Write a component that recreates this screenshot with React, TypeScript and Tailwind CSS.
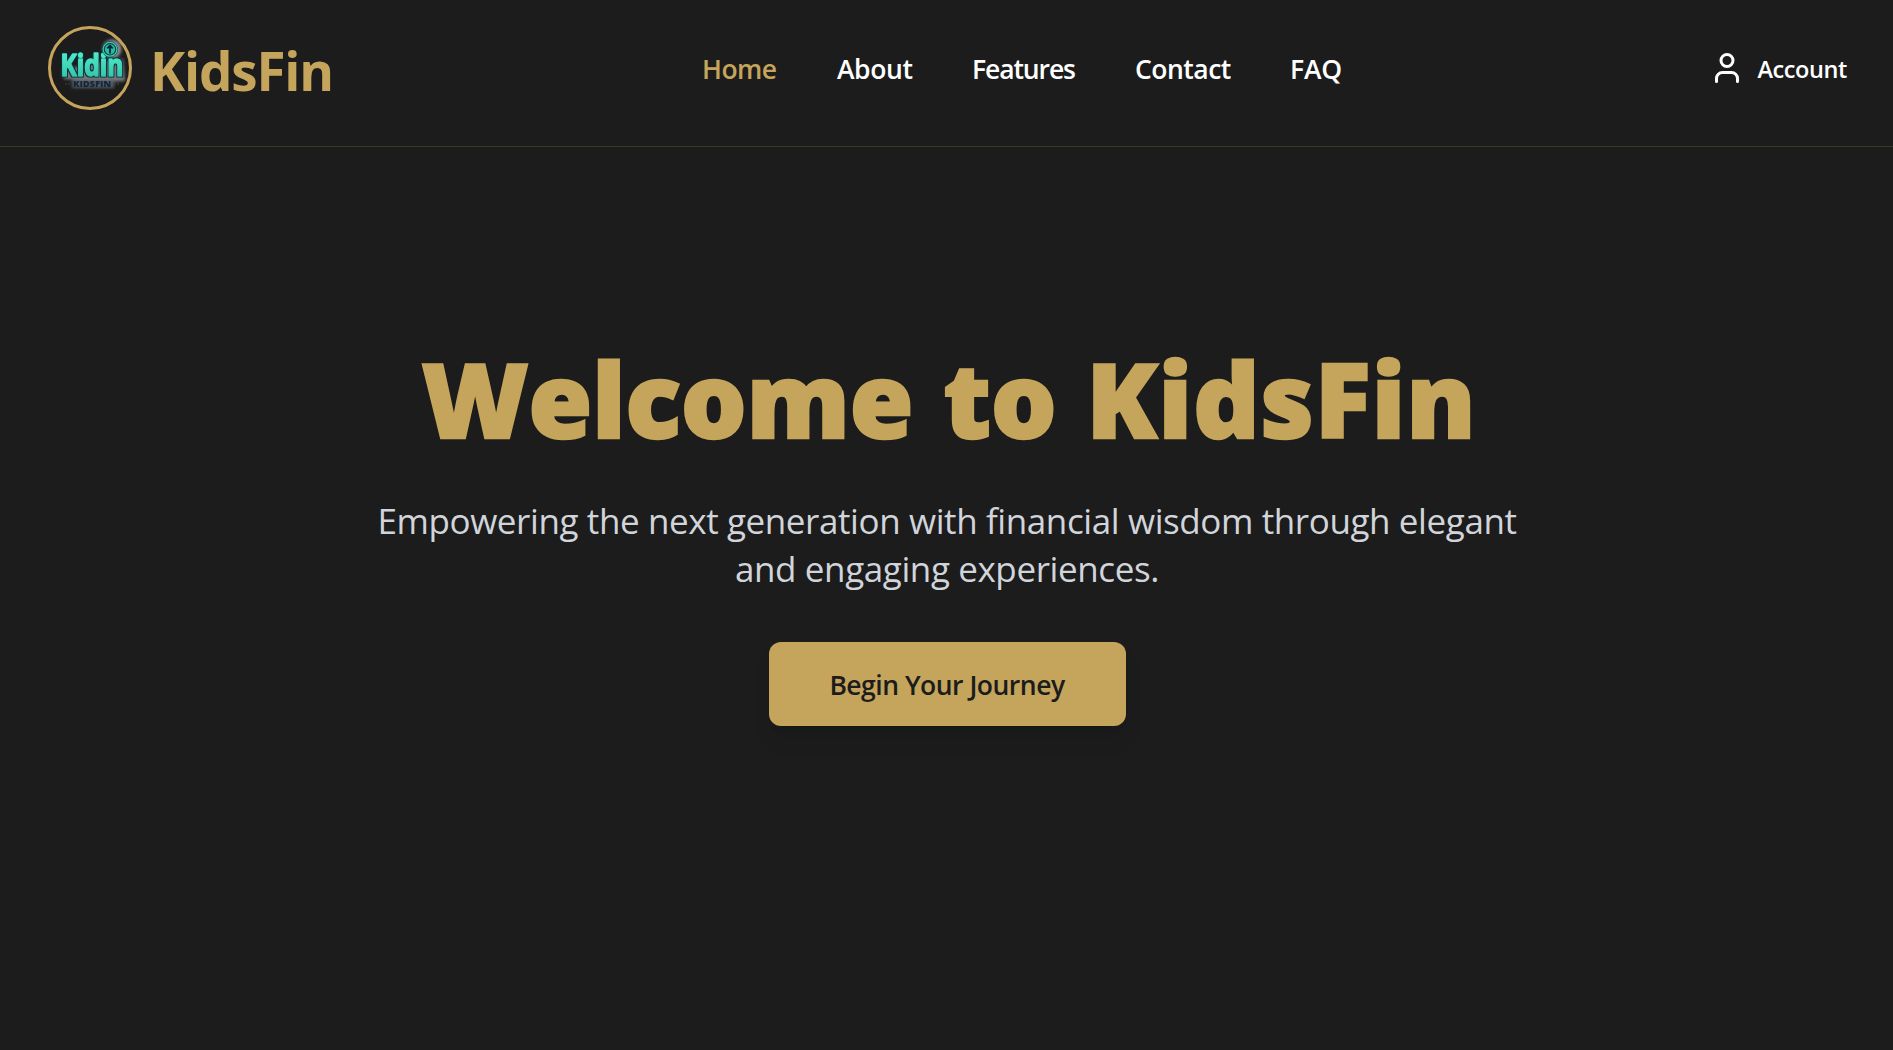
import React from "react";
import { User } from "lucide-react";

function LogoMark() {
  return (
    <div className="h-[84px] w-[84px] shrink-0 rounded-full border-[3px] border-[#c5a55c]">
      <svg viewBox="3 3 78 78" className="h-full w-full">
        <defs>
          <filter id="haze" x="-30%" y="-30%" width="160%" height="160%">
            <feGaussianBlur stdDeviation="1.7" />
          </filter>
          <filter id="outline" x="-10%" y="-20%" width="120%" height="140%">
            <feMorphology in="SourceAlpha" operator="dilate" radius="1" result="fat" />
            <feFlood floodColor="#0c2c43" />
            <feComposite in2="fat" operator="in" result="navy" />
            <feMerge>
              <feMergeNode in="navy" />
              <feMergeNode in="SourceGraphic" />
            </feMerge>
          </filter>
          <linearGradient id="teal" x1="0" y1="0" x2="0" y2="1">
            <stop offset="0.2" stopColor="#52ecc8" />
            <stop offset="1" stopColor="#27bd9f" />
          </linearGradient>
        </defs>
        <g filter="url(#haze)">
          <circle cx="64" cy="23" r="9.5" fill="#8a8a8a" />
          <path d="M14 44 L62 34 L75 33 L77 55 L62 56 L16 53 Z" fill="#75777a" />
          <path d="M24 54 H66 V62 H24 Z" fill="#565b60" />
        </g>
        <text
          x="12.5"
          y="49.6"
          textLength="63"
          lengthAdjust="spacingAndGlyphs"
          fontFamily="'Open Sans', sans-serif"
          fontWeight="700"
          fontSize="29.5"
          fill="url(#teal)"
          stroke="url(#teal)"
          strokeWidth="1.2"
          strokeLinejoin="round"
          filter="url(#outline)"
        >
          Kidin
        </text>
        <circle cx="62" cy="23.3" r="8" fill="#0c3442" />
        <circle cx="62" cy="23.3" r="6.9" fill="none" stroke="#35cfae" strokeWidth="1.3" />
        <circle cx="62" cy="23.3" r="5.2" fill="#2cb99d" />
        <path d="M62 27.4 V20 M59.3 22.3 L62 19.6 L64.7 22.3" fill="none" stroke="#0a2638" strokeWidth="1.8" />
        <text
          x="25"
          y="61.3"
          textLength="38"
          lengthAdjust="spacingAndGlyphs"
          fontFamily="'Open Sans', sans-serif"
          fontWeight="800"
          fontSize="8"
          fill="#11263d"
        >
          KIDSFIN
        </text>
        <path d="M17 58 h5 M66 58 h5" stroke="#3b454b" strokeWidth="1" strokeDasharray="2 1" />
      </svg>
    </div>
  );
}

function Header() {
  return (
    <header className="flex h-[147px] items-start border-b border-[#3e3729] pt-[26px] pr-[46px] pl-12">
      <a href="#" className="flex h-[84px] w-[654px] items-center">
        <LogoMark />
        <span className="ml-[18px] pt-[5px] text-[53px] leading-[60px] font-bold tracking-[-1.2px] text-[#c5a55c]">
          KidsFin
        </span>
      </a>
      <nav className="flex h-[84px] items-center pt-[2px] text-[26.5px] leading-9 font-semibold text-white">
        <a href="#" className="w-[135px] tracking-[-0.5px] text-[#c5a55c]">Home</a>
        <a href="#" className="w-[135px] tracking-[-0.4px]">About</a>
        <a href="#" className="w-[163px] tracking-[-1.1px]">Features</a>
        <a href="#" className="w-[155px] tracking-[-0.5px]">Contact</a>
        <a href="#" className="tracking-[-0.2px]">FAQ</a>
      </nav>
      <a href="#" className="ml-auto flex h-[84px] items-center gap-3 text-white">
        <User size={36} strokeWidth={2} />
        <span className="pt-[2px] text-[23.5px] leading-9 font-semibold tracking-[-0.4px]">Account</span>
      </a>
    </header>
  );
}

export default function App() {
  return (
    <div className="min-h-screen bg-[#1c1c1c] font-['Open_Sans',sans-serif]">
      <Header />
      <main className="flex flex-col items-center pt-[197px] pl-px">
        <h1 className="flex text-[103px] leading-[108px] font-extrabold text-[#c5a55c] [-webkit-text-stroke:2.5px_#c5a55c]">
          <span className="w-[522px]">Welcome</span>{" "}
          <span className="w-[143px]">to</span>{" "}
          <span className="w-[386px] tracking-[1.2px]">KidsFin</span>
        </h1>
        <p className="mt-[45px] text-center text-[35px] leading-[48px] tracking-[-0.4px] text-[#d1d5db]">
          Empowering the next generation with financial wisdom through elegant
          <br />
          and engaging experiences.
        </p>
        <button className="mt-[49px] h-[84px] w-[357px] rounded-xl bg-[#c5a55c] pt-[3px] text-[26.5px] font-semibold tracking-[-0.5px] text-[#1c1c1c] shadow-[0_15px_22px_-4px_rgba(0,0,0,0.1),0_6px_9px_-6px_rgba(0,0,0,0.1)]">
          Begin Your Journey
        </button>
      </main>
    </div>
  );
}
